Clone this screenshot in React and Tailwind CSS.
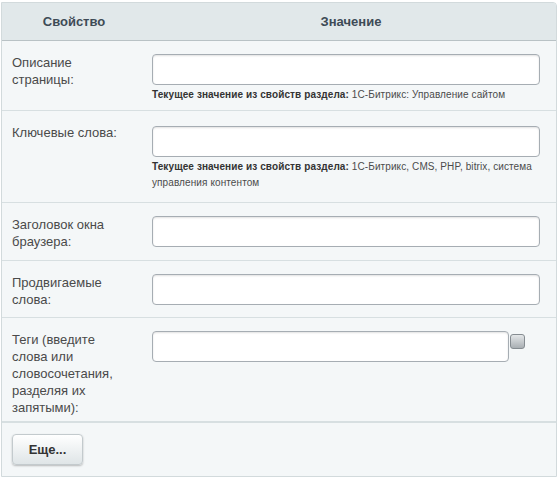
import React from "react";

const font = { fontFamily: '"Liberation Sans", Arial, sans-serif' };

function TextField({ width }) {
  return (
    <input
      type="text"
      className={
        "block h-[31px] rounded-[4px] border border-[#a6adb3] bg-white px-2 text-[13px] shadow-[inset_0_1px_2px_rgba(0,0,0,0.12)] outline-none " +
        width
      }
    />
  );
}

function Hint({ value }) {
  return (
    <div className="mt-[2px] text-[10px] leading-[16px] tracking-[0.1px] text-[#4b4b4b]">
      <span className="font-bold text-[#333]">Текущее значение из свойств раздела:</span> {value}
    </div>
  );
}

function Row({ label, children, pad, last }) {
  return (
    <div className={"flex " + (last ? "" : "border-b border-[#d7dfe1]")}>
      <div className="w-[140px] shrink-0 pl-[10px] pr-2 pt-[13px] pb-[5px] text-[13px] leading-[17px] text-[#4a4a4a]">
        {label}
      </div>
      <div className={"flex-1 pl-[10px] pr-[18px] " + pad}>{children}</div>
    </div>
  );
}

export default function App() {
  return (
    <div style={font} className="h-[480px] w-[560px] bg-white pl-[1px] pt-[2px]">
      <div className="w-[556px] overflow-hidden rounded-tr-[4px] border border-[#d2dadc] bg-[#f4f7f8]">
        <div className="flex h-[38px] items-center border-b border-[#b9c2c5] bg-[#e1e8ea] text-[13px] font-bold text-[#3e4b56]">
          <div className="w-[144px] text-center">Свойство</div>
          <div className="flex-1 text-center">Значение</div>
        </div>

        <Row label={<>Описание<br />страницы:</>} pad="pt-[13px] pb-[7px]">
          <TextField width="w-[388px]" />
          <Hint value="1С-Битрикс: Управление сайтом" />
        </Row>

        <Row label="Ключевые слова:" pad="pt-[15px] pb-[11px]">
          <TextField width="w-[388px]" />
          <Hint value="1С-Битрикс, CMS, PHP, bitrix, система управления контентом" />
        </Row>

        <Row label={<>Заголовок окна<br />браузера:</>} pad="pt-[13px] pb-[13px]">
          <TextField width="w-[388px]" />
        </Row>

        <Row label={<>Продвигаемые<br />слова:</>} pad="pt-[13px] pb-[12px]">
          <TextField width="w-[388px]" />
        </Row>

        <Row
          label={<>Теги (введите<br />слова или<br />словосочетания,<br />разделяя их<br />запятыми):</>}
          pad="pt-[13px] pb-[12px]"
        >
          <div className="flex items-start">
            <TextField width="w-[357px]" />
            <span className="ml-[1px] mt-[3px] block h-[15px] w-[15px] rounded-[3px] border border-[#858c91] bg-gradient-to-b from-[#e4e7e9] to-[#a9afb3]" />
          </div>
        </Row>

        <div className="border-t border-[#d7dfe1] px-[10px] pt-[11px] pb-[11px]">
          <button
            type="button"
            className="h-[31px] w-[71px] rounded-[4px] border border-[#c3cacd] bg-gradient-to-b from-white to-[#dfe5e7] text-[13px] font-bold text-[#333] shadow-[0_1px_2px_rgba(0,0,0,0.25)]"
          >
            Еще...
          </button>
        </div>
      </div>
    </div>
  );
}
